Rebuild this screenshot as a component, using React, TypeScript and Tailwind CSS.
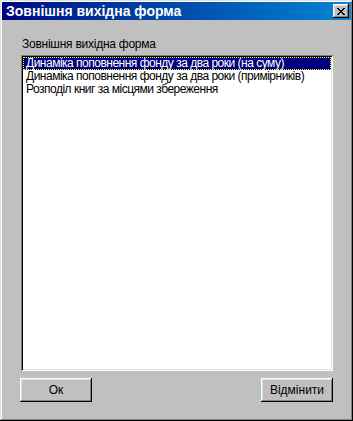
import React from "react";

const items = [
  { id: 1, text: "Динаміка поповнення фонду за два роки (на суму)" },
  { id: 2, text: "Динаміка поповнення фонду за два роки (примірників)" },
  { id: 3, text: "Розподіл книг за місцями збереження" },
];

const raised =
  "shadow-[inset_-1px_-1px_#000,inset_1px_1px_#fff,inset_-2px_-2px_#808080,inset_2px_2px_#dfdfdf]";

const Button = ({ label }: { label: string }) => (
  <button
    className={`w-[72px] h-[24px] bg-[#c0c0c0] text-[12px] text-black ${raised}`}
  >
    {label}
  </button>
);

export default function App() {
  return (
    <div
      className="w-[353px] h-[421px] bg-[#c0c0c0] p-[2px] flex flex-col shadow-[inset_-1px_-1px_#000,inset_1px_1px_#dfdfdf,inset_-2px_-2px_#808080,inset_2px_2px_#fff]"
      style={{ fontFamily: '"Liberation Sans", Arial, sans-serif' }}
    >
      <div className="h-[18px] bg-gradient-to-r from-[#000080] to-[#1084d0] flex items-center justify-between pl-[4px] pr-[2px]">
        <span className="text-white font-bold text-[14px] leading-none">
          Зовнішня вихідна форма
        </span>
        <div
          className={`w-[16px] h-[14px] bg-[#c0c0c0] flex items-center justify-center ${raised}`}
        >
          <svg width="8" height="7" viewBox="0 0 8 7">
            <path
              d="M0 0h2v1h1v1h2V1h1V0h2v1H7v1H6v1H5v1h1v1h1v1h1v1H6V6H5V5H3v1H2v1H0V6h1V5h1V4h1V3H2V2H1V1H0z"
              fill="#000"
            />
          </svg>
        </div>
      </div>

      <div className="flex-1 flex flex-col px-[18px]">
        <div className="pt-[17px] pl-[2px] text-[12px] leading-[14px] tracking-[-0.25px] text-black">
          Зовнішня вихідна форма
        </div>
        <div className="mt-[4px] h-[316px] ml-[1px] w-[312px] bg-white p-[2px] shadow-[inset_1px_1px_#808080,inset_-1px_-1px_#fff,inset_2px_2px_#000,inset_-2px_-2px_#dfdfdf]">
          {items.map((it, i) => (
            <div
              key={it.id}
              className={`h-[13px] pl-[3px] text-[12px] leading-[13px] tracking-[-0.5px] whitespace-nowrap ${
                i === 0
                  ? "bg-[#000080] text-white outline-1 outline-dotted outline-[#ffff00] -outline-offset-1"
                  : "text-black"
              }`}
            >
              {it.text}
            </div>
          ))}
        </div>
        <div className="mt-[7px] flex justify-between">
          <Button label="Ок" />
          <Button label="Відмінити" />
        </div>
      </div>
    </div>
  );
}
